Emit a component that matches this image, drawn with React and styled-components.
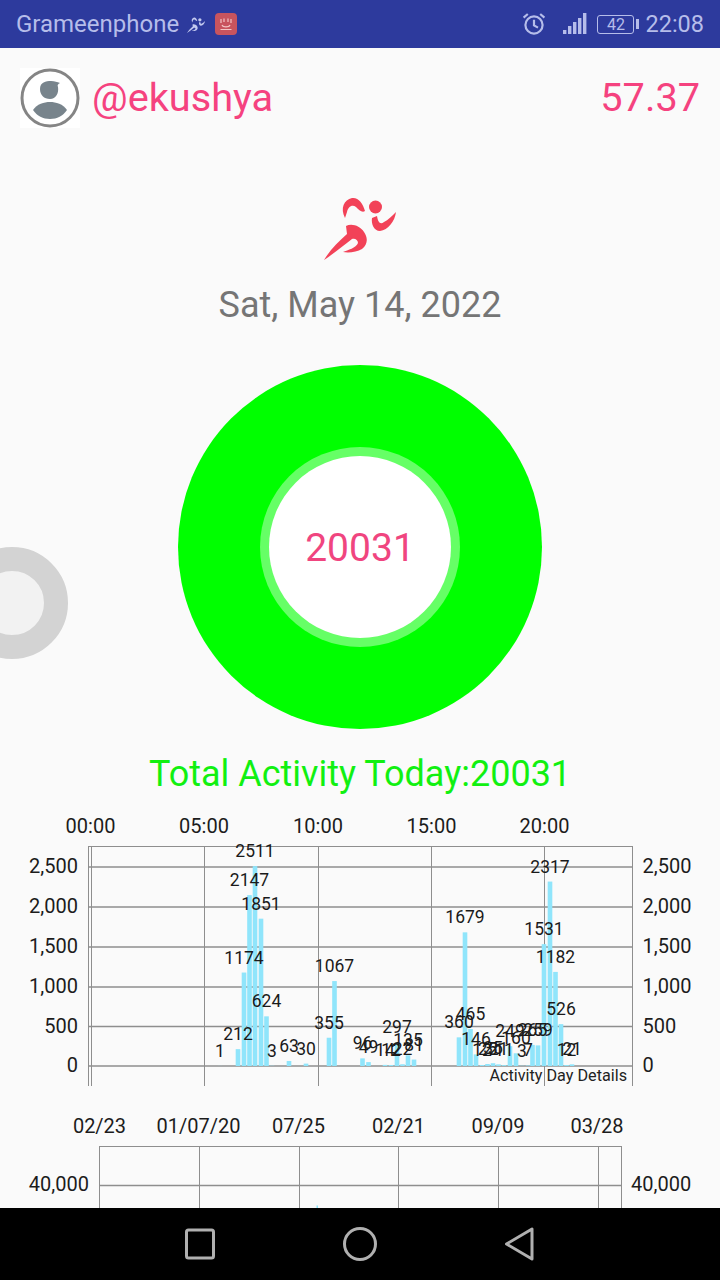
import React from "react";
import styled, { createGlobalStyle } from "styled-components";

const Global = createGlobalStyle`
  html, body { margin: 0; padding: 0; background: #fafafa; }
  body { font-family: Roboto, "Liberation Sans", sans-serif; }
`;

const Phone = styled.div`
  position: relative;
  width: 720px;
  height: 1280px;
  overflow: hidden;
  display: flex;
  flex-direction: column;
  background: #fafafa;
`;

const StatusBar = styled.header`
  flex: 0 0 48px;
  height: 48px;
  background: #2d3a9d;
  color: #b6bdea;
  display: flex;
  align-items: center;
  justify-content: space-between;
  padding: 0 16px;
  box-sizing: border-box;
  font-size: 23.5px;
`;

const StatusGroup = styled.div`
  display: flex;
  align-items: center;
`;

const Carrier = styled.span`
  margin-right: 2px;
  font-size: 24px;
`;

const AppBadge = styled.div`
  width: 22px;
  height: 22px;
  margin-left: 4px;
  border-radius: 4px;
  background: #c8545e;
  display: flex;
  align-items: center;
  justify-content: center;
`;

const AlarmIcon = styled.svg`
  margin-right: 17px;
`;

const Battery = styled.div`
  position: relative;
  width: 37px;
  height: 19px;
  box-sizing: border-box;
  border: 1.5px solid #b6bdea;
  border-radius: 3px;
  margin: 0 11px 0 10px;
  display: flex;
  align-items: center;
  justify-content: center;
  font-size: 16px;
  &::after {
    content: "";
    position: absolute;
    right: -6px;
    top: 3px;
    width: 3px;
    height: 10px;
    background: #b6bdea;
  }
`;

const Content = styled.main`
  flex: 1;
  min-height: 0;
  overflow: hidden;
  display: flex;
  flex-direction: column;
  align-items: center;
`;

const ProfileRow = styled.section`
  align-self: stretch;
  display: flex;
  align-items: center;
  justify-content: space-between;
  padding: 20px 20px 0 20px;
`;

const Profile = styled.div`
  display: flex;
  align-items: center;
  gap: 12px;
`;

const Avatar = styled.div`
  width: 60px;
  height: 60px;
  background: #fff;
  line-height: 0;
`;

const PinkText = styled.span`
  color: #f5427f;
  font-size: 39.7px;
  line-height: 60px;
`;

const RunnerBox = styled.div`
  margin-top: 52px;
  height: 90px;
  line-height: 0;
`;

const DateLine = styled.h2`
  margin: 0 0 27px;
  height: 68px;
  line-height: 70px;
  font-size: 36px;
  font-weight: 400;
  color: #757575;
`;

const Ring = styled.div`
  flex: 0 0 364px;
  width: 364px;
  height: 364px;
  border-radius: 50%;
  background: #00ff00;
  display: flex;
  align-items: center;
  justify-content: center;
`;

const RingHalo = styled.div`
  width: 200px;
  height: 200px;
  border-radius: 50%;
  background: #66ff66;
  display: flex;
  align-items: center;
  justify-content: center;
`;

const RingCore = styled.div`
  width: 182px;
  height: 182px;
  border-radius: 50%;
  background: #fff;
  display: flex;
  align-items: center;
  justify-content: center;
  color: #f0457f;
  font-size: 39px;
  padding-top: 1px;
  box-sizing: border-box;
`;

const Total = styled.div`
  flex: 0 0 auto;
  padding: 27px 0 18px;
  line-height: 36px;
  font-size: 36px;
  color: #11f011;
`;

const Floating = styled.div`
  position: absolute;
  left: -44px;
  top: 547px;
  width: 112px;
  height: 112px;
  box-sizing: border-box;
  border-radius: 50%;
  border: 24px solid #d3d3d3;
  background: #f2f2f2;
`;

const ChartSvg = styled.svg`
  display: block;
  flex: 0 0 auto;
`;

const Grid = styled.line`
  stroke: #8e8e8e;
  stroke-width: ${(p) => p.$w || 1.4}px;
`;

const Bar = styled.rect`
  fill: #90e5fb;
`;

const AxisLabel = styled.text`
  font-family: Roboto, sans-serif;
  font-size: 20px;
  fill: #1c1c1c;
  text-anchor: ${(p) => p.$anchor || "middle"};
`;

const ValueLabel = styled.text`
  font-family: Roboto, sans-serif;
  font-size: 17.5px;
  fill: #1a1a1a;
  text-anchor: middle;
`;

const ChartNote = styled.text`
  font-family: Roboto, sans-serif;
  font-size: 16.2px;
  fill: #222;
  text-anchor: end;
`;

const NavBar = styled.nav`
  flex: 0 0 72px;
  background: #000;
  display: flex;
  align-items: center;
  justify-content: center;
  gap: 120px;
`;

const NavIcon = styled.svg`
  width: 40px;
  height: 40px;
  fill: none;
  stroke: #b0b0b0;
  stroke-width: 3;
  stroke-linejoin: round;
`;

function RunnerIcon({ color, width, height }) {
  return (
    <svg width={width} height={height} viewBox="0 0 120 90" fill={color}>
      <circle cx="75.5" cy="27" r="6.5" />
      <path d="M45 38 C40 28 44 20 52 18 C58 17 63 23 65 31 C62 33 59 30 56 27 C52 24 48 27 47 32 Z" />
      <path d="M77 36 C78 42 80 45 84 42 C88 40 92 36 96 32 C95 41 88 50 80 51 C74 51 71 44 72 38 Z" />
      <path d="M46 46 C52 43 60 46 64 52 C68 58 68 64 62 69 C57 72 49 73 43 72 C48 70 56 68 58 63 C58 60 55 58 52 59 C44 65 33 74 24 80 C30 70 38 62 47 54 Z" />
    </svg>
  );
}

const Y0 = 256; // zero line inside the first chart's svg (1066 - 810)
const SCALE = 0.0796;

const dayBars = [
  [220, 1], [238, 212], [244, 1174], [249.5, 2147], [255, 2511], [261, 1851], [266.5, 624], [272, 3],
  [289, 63], [306, 30], [329, 355], [334.5, 1067], [362.5, 96], [368.5, 49], [385, 14], [391, 12],
  [397, 297], [402.5, 22], [408, 135], [414, 81], [459, 360], [465, 1679], [470.5, 465], [476, 146],
  [482, 12], [487.5, 25], [493, 35], [498.5, 21], [504, 11], [510, 249], [516, 160], [522, 3], [528, 7],
  [532.5, 265], [538, 259], [544, 1531], [550, 2317], [555.5, 1182], [561, 526], [566.5, 12], [572, 21],
];

function DayChart() {
  const hours = [
    [90.5, "00:00"], [204, "05:00"], [318, "10:00"], [431.5, "15:00"], [544.5, "20:00"],
  ];
  const rows = [[57, "2,500"], [97, "2,000"], [137, "1,500"], [177, "1,000"], [216.5, "500"], [256, "0"]];
  const verticals = [88.5, 91.5, 204.5, 318.5, 431.5, 544.5, 632.5];
  return (
    <ChartSvg width="720" height="290" viewBox="0 0 720 290">
      {hours.map(([x, t]) => (
        <AxisLabel key={t} x={x} y="23">{t}</AxisLabel>
      ))}
      {verticals.map((x) => (
        <Grid key={x} $w={1} x1={x} x2={x} y1="36" y2="276" />
      ))}
      <Grid x1="88.5" x2="632.5" y1="36.5" y2="36.5" $w={1} />
      {rows.map(([y, t]) => (
        <React.Fragment key={t}>
          <Grid x1="88.5" x2="632.5" y1={y} y2={y} />
          <AxisLabel $anchor="end" x="78" y={y + 6}>{t}</AxisLabel>
          <AxisLabel $anchor="start" x="642.5" y={y + 6}>{t}</AxisLabel>
        </React.Fragment>
      ))}
      {dayBars.map(([x, v]) => (
        <Bar key={x} x={x - 2.3} width="4.6" y={Y0 - v * SCALE} height={v * SCALE} />
      ))}
      {dayBars.map(([x, v]) => (
        <ValueLabel key={x} x={x} y={Y0 - v * SCALE - 9}>{v}</ValueLabel>
      ))}
      <ChartNote x="627" y="271">Activity Day Details</ChartNote>
    </ChartSvg>
  );
}

function HistoryChart() {
  const dates = [
    [99.5, "02/23"], [198.5, "01/07/20"], [298.5, "07/25"], [398.5, "02/21"], [498, "09/09"], [597, "03/28"],
  ];
  const verticals = [99.5, 199.5, 299.5, 398.5, 498.5, 598.5, 621.5];
  return (
    <ChartSvg width="720" height="108" viewBox="0 0 720 108">
      {dates.map(([x, t]) => (
        <AxisLabel key={t} x={x} y="33">{t}</AxisLabel>
      ))}
      {verticals.map((x) => (
        <Grid key={x} $w={1} x1={x} x2={x} y1="46" y2="108" />
      ))}
      <Grid x1="99.5" x2="621.5" y1="46.5" y2="46.5" $w={1} />
      <Grid x1="99.5" x2="621.5" y1="85.5" y2="85.5" />
      <AxisLabel $anchor="end" x="89" y="91">40,000</AxisLabel>
      <AxisLabel $anchor="start" x="631" y="91">40,000</AxisLabel>
      <Bar x="316.5" y="105.5" width="1.5" height="2.5" />
    </ChartSvg>
  );
}

export default function App() {
  return (
    <Phone>
      <Global />
      <StatusBar>
        <StatusGroup>
          <Carrier>Grameenphone</Carrier>
          <RunnerIcon color="#c3c9ef" width={30} height={22.5} />
          <AppBadge>
            <svg width="16" height="16" viewBox="0 0 16 16" fill="none" stroke="#f3c5c5" strokeWidth="1.2">
              <path d="M3 3 L3 7 M6 2.5 L6 6 M10 2.5 L10 6 M13 3 L13 7 M4 9 C5 11.5 11 11.5 12 9 M2.5 13.5 L13.5 13.5" />
            </svg>
          </AppBadge>
        </StatusGroup>
        <StatusGroup>
          <AlarmIcon width="24" height="24" viewBox="0 0 24 24" fill="none" stroke="#b6bdea" strokeWidth="2.2">
            <circle cx="12" cy="13" r="8.6" />
            <path d="M12 7.8 V13.4 L16 15.6 M1.6 5.6 L5.8 2 M22.4 5.6 L18.2 2" />
          </AlarmIcon>
          <svg width="24" height="22" viewBox="0 0 24 22" fill="#b6bdea">
            <rect x="0" y="17" width="3.4" height="4" />
            <rect x="5" y="13" width="3.4" height="8" />
            <rect x="10" y="9" width="3.4" height="12" />
            <rect x="15" y="5" width="3.4" height="16" />
            <rect x="20" y="0" width="3.4" height="21" />
          </svg>
          <Battery>42</Battery>
          <span>22:08</span>
        </StatusGroup>
      </StatusBar>

      <Content>
        <ProfileRow>
          <Profile>
            <Avatar>
              <svg width="60" height="60" viewBox="0 0 60 60">
                <circle cx="30" cy="30" r="28" fill="none" stroke="#858585" strokeWidth="3" />
                <path d="M20 21 C20 14 26 13 31 13 C35 13 37 14 40 15 C38 16 37 17 38 19 C39 25 36 31 30 31 C24 31 20 27 20 21 Z" fill="#78848c" />
                <path d="M13 42 C17 36 24 34 30 34 C36 34 43 36 47 42 C43 48 37 51 30 51 C23 51 17 48 13 42 Z" fill="#78848c" />
              </svg>
            </Avatar>
            <PinkText>@ekushya</PinkText>
          </Profile>
          <PinkText>57.37</PinkText>
        </ProfileRow>

        <RunnerBox>
          <RunnerIcon color="#f24258" width={120} height={90} />
        </RunnerBox>
        <DateLine>Sat, May 14, 2022</DateLine>

        <Ring>
          <RingHalo>
            <RingCore>20031</RingCore>
          </RingHalo>
        </Ring>
        <Total>Total Activity Today:20031</Total>

        <DayChart />
        <HistoryChart />
      </Content>

      <NavBar>
        <NavIcon viewBox="0 0 40 40">
          <rect x="6.5" y="6" width="27" height="28" rx="2" />
        </NavIcon>
        <NavIcon viewBox="0 0 40 40">
          <circle cx="20" cy="20" r="15.5" />
        </NavIcon>
        <NavIcon viewBox="0 0 40 40">
          <path d="M32 5 V35 L6.5 20 Z" />
        </NavIcon>
      </NavBar>

      <Floating />
    </Phone>
  );
}
